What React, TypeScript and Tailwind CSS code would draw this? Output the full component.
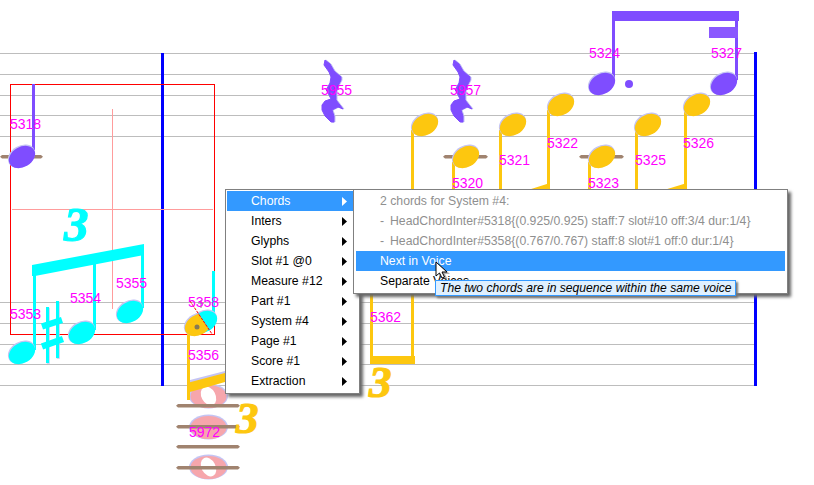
import React from 'react';

const GOLD = '#fdc70f';
const PURPLE = '#7f4dff';
const CYAN = '#00ffff';
const HALO = '#c4c4f4';
const BROWN = '#a0836f';

const staffLines = [53, 74, 95, 115, 136, 302, 323, 344, 364, 385];

// heads: centre x, centre y, colour
const heads: [number, number, string][] = [
  [22, 157, PURPLE],
  [602, 84, PURPLE],
  [724, 84, PURPLE],
  [425, 125, GOLD],
  [466, 157, GOLD],
  [513, 125, GOLD],
  [561, 105, GOLD],
  [602, 157, GOLD],
  [648, 125, GOLD],
  [697, 105, GOLD],
  [22, 353, CYAN],
  [82, 333, CYAN],
  [130, 312, CYAN],
];

// stems: x, top, bottom, colour
const stems: [number, number, number, string][] = [
  [32, 84, 150, PURPLE],
  [612, 11, 80, PURPLE],
  [735, 11, 80, PURPLE],
  [411, 130, 360, GOLD],
  [452, 162, 200, GOLD],
  [499, 130, 200, GOLD],
  [547, 110, 200, GOLD],
  [588, 162, 200, GOLD],
  [635, 130, 200, GOLD],
  [684, 110, 200, GOLD],
  [370, 280, 360, GOLD],
  [187, 327, 400, GOLD],
  [33, 265, 350, CYAN],
  [93, 262, 330, CYAN],
  [141, 250, 308, CYAN],
  [212, 271, 320, CYAN],
];

const labels: [string, number, number][] = [
  ['5318', 10, 129],
  ['5353', 10, 319],
  ['5354', 70, 303],
  ['5355', 116, 288],
  ['5358', 188, 307],
  ['5356', 188, 360],
  ['5972', 189, 437],
  ['5362', 370, 322],
  ['5955', 321, 95],
  ['5957', 450, 95],
  ['5320', 452, 188],
  ['5321', 499, 165],
  ['5322', 547, 148],
  ['5323', 588, 188],
  ['5324', 589, 58],
  ['5327', 711, 58],
  ['5325', 635, 165],
  ['5326', 683, 148],
];

const ledgers: [number, number, number][] = [
  [0, 43, 157],
  [443, 488, 157],
  [579, 624, 157],
];

const lowLedgers: [number, number, number][] = [
  [176, 240, 406],
  [176, 240, 427],
  [176, 240, 447],
  [176, 240, 468],
];

const ledgerPath = (a: number, b: number, y: number) =>
  `M${a} ${y - 0.25} L${a + 2} ${y - 2} L${b - 2} ${y - 2} L${b} ${y - 0.25} L${b - 2} ${y + 1.5} L${a + 2} ${y + 1.5} Z`;

const Rest = ({ x }: { x: number }) => {
  const d =
    'M4 0 L9 4 L13 11 L20 17 L20 20 L17 26 L15 32 L15 40 L22 49 L17 47 L11 50 L13 56 L13 62 L10 62 L4 56 L1 50 L1 45 L4 41 L10 39 L6 31 L5 30 L9 23 L10 17 L8 12 L3 5 Z';
  return (
    <g transform={`translate(${x} 60)`}>
      <path d={d} fill={HALO} stroke={HALO} transform="translate(1 0)" />
      <path d={d} fill={PURPLE} strokeLinejoin="round" stroke={PURPLE} strokeWidth={1} />
    </g>
  );
};

const WholeNote = ({ cy, hole = true }: { cy: number; hole?: boolean }) => (
  <g>
    <ellipse cx={208.5} cy={cy} rx={19.5} ry={12.5} fill={HALO} />
    <ellipse cx={208.5} cy={cy + 0.5} rx={18} ry={11.5} fill="#f6a6ac" />
    {hole && <ellipse cx={208.5} cy={cy} rx={7} ry={10} fill="#ffffff" transform={`rotate(-28 208.5 ${cy})`} />}
  </g>
);

const Head = ({ x, y, c }: { x: number; y: number; c: string }) => (
  <g transform={`rotate(-30 ${x} ${y})`}>
    <ellipse cx={x} cy={y - 1} rx={14.5} ry={10.5} fill={HALO} />
    <ellipse cx={x} cy={y} rx={14} ry={10} fill={c} />
  </g>
);

const Score = () => (
  <svg className="absolute inset-0" width={814} height={485} viewBox="0 0 814 485">
    <defs>
      {/* part of the shared head that lies under the red diagonal */}
      <clipPath id="belowDiagonal">
        <polygon points="180,301 190,301 212,334 212,345 180,345" />
      </clipPath>
    </defs>

    {staffLines.map((y) => (
      <rect key={y} x={0} y={y} width={755} height={1} fill="#bdbdbd" />
    ))}
    <rect x={161} y={53} width={3} height={333} fill="#0000ff" />
    <rect x={754} y={52} width={3} height={334} fill="#0000ff" />

    {ledgers.map(([a, b, y]) => (
      <path key={`${a}-${y}`} d={ledgerPath(a, b, y)} fill={BROWN} />
    ))}

    {/* red selection box */}
    <rect x={10.5} y={84.5} width={204} height={250} fill="none" stroke="#ff0000" />
    <rect x={112} y={109} width={1} height={200} fill="#ff9c9c" />
    <rect x={12} y={209} width={201} height={1} fill="#ff9c9c" />

    {/* hidden whole notes */}
    <WholeNote cy={396} />
    <WholeNote cy={427} hole={false} />
    <WholeNote cy={467} />
    {lowLedgers.map(([a, b, y]) => (
      <path key={y} d={ledgerPath(a, b, y)} fill={BROWN} />
    ))}

    {stems.map(([x, t, b, c]) => (
      <rect key={`${x}-${t}`} x={x} y={t} width={3} height={b - t} fill={c} />
    ))}

    {heads.map(([x, y, c]) => (
      <Head key={`${x}-${y}`} x={x} y={y} c={c} />
    ))}

    {/* head shared by two chords */}
    <Head x={204} y={322} c={CYAN} />
    <g clipPath="url(#belowDiagonal)">
      <Head x={198} y={325} c={GOLD} />
    </g>

    <Rest x={321} />
    <Rest x={450} />

    {/* purple beams */}
    <rect x={612} y={11} width={127} height={10} fill={PURPLE} />
    <rect x={709} y={27} width={29} height={11} fill="#8a58ff" />
    <circle cx={629} cy={84} r={4} fill={PURPLE} />

    {/* cyan beam and sharp */}
    <polygon points="32,265 144,244 144,255 35,276 32,276" fill={CYAN} />
    <path d="M47.5 307 V363 M57.5 301 V358" stroke={HALO} strokeWidth={3} transform="translate(0.7 0.7)" />
    <path d="M47.5 307 V363 M57.5 301 V358" stroke={CYAN} strokeWidth={3} />
    <path d="M42 326.5 L62 320 M42 346.5 L63 339" stroke={CYAN} strokeWidth={6.5} />

    {/* gold beams */}
    <polygon points="370,356 415,356 415,364 370,364" fill={GOLD} />
    <polygon points="528,190 550,183 550,190" fill={GOLD} />
    <polygon points="664,190 687,183 687,190" fill={GOLD} />
    <polygon points="190,380 225,371 225,375 190,384" fill={HALO} />
    <polygon points="187,383 225,373 225,382 190,392 187,392" fill={GOLD} />

    {/* red pointer */}
    <path d="M190 301 L212 334" stroke="#ff0000" strokeDasharray="3 1" />
    <circle cx={197} cy={327} r={2.5} fill="#857a55" />
    <path d="M201 300 V308 M198 303 H204" stroke="#888888" />

    {/* tuplets */}
    <g fontFamily="'Liberation Serif', serif" fontWeight="bold" fontStyle="italic" strokeWidth={1.2}>
      <text x={64} y={241} fontSize={49} fill={CYAN} stroke={CYAN}>3</text>
      <text x={369} y={397} fontSize={45} fill={GOLD} stroke={GOLD}>3</text>
      <text x={236} y={433} fontSize={45} fill={GOLD} stroke={GOLD}>3</text>
    </g>

    {/* ids */}
    <g fontFamily="'Liberation Sans', sans-serif" fontSize={14} fill="#ff00ff">
      {labels.map(([t, x, y]) => (
        <text key={`${t}-${x}`} x={x} y={y}>{t}</text>
      ))}
    </g>
  </svg>
);

const Arrow = ({ white }: { white?: boolean }) => (
  <svg width={5} height={9} viewBox="0 0 5 9" className={white ? 'text-white' : 'text-black'}>
    <path d="M0 0 L5 4.5 L0 9 Z" fill="currentColor" />
  </svg>
);

const mainItems = ['Inters', 'Glyphs', 'Slot #1 @0', 'Measure #12', 'Part #1', 'System #4', 'Page #1', 'Score #1', 'Extraction'];

const ContextMenu = () => (
  <div className="absolute left-[225px] top-[189px] w-[135px] h-[205px] bg-white border border-[#808080] p-px shadow-[3px_3px_3px_#666666] text-[12.25px] text-black">
    <div className="flex items-center h-5 pl-6 pr-[11px] justify-between bg-[#3399ff] text-white">
      <span>Chords</span>
      <Arrow white />
    </div>
    {mainItems.map((m) => (
      <div key={m} className="flex items-center h-5 pl-6 pr-[11px] justify-between">
        <span>{m}</span>
        <Arrow />
      </div>
    ))}
  </div>
);

const chordRows = [
  'HeadChordInter#5318{(0.925/0.925) staff:7 slot#10 off:3/4 dur:1/4}',
  'HeadChordInter#5358{(0.767/0.767) staff:8 slot#1 off:0 dur:1/4}',
];

const SubMenu = () => (
  <div className="absolute left-[353px] top-[189px] w-[435px] h-[105px] bg-white border border-[#808080] px-[2px] pt-px shadow-[3px_3px_3px_#666666] text-[12.25px]">
    <div className="flex items-center h-5 pl-6 text-[#8f8f8f]">2 chords for System #4:</div>
    {chordRows.map((r) => (
      <div key={r} className="flex items-center h-5 pl-6 text-[#8f8f8f] whitespace-nowrap">
        <span className="w-[10px]">-</span>
        <span>{r}</span>
      </div>
    ))}
    <div className="flex items-center h-5 pl-6 bg-[#3399ff] text-white">Next in Voice</div>
    <div className="flex items-center h-5 pl-6 text-black">Separate Voices</div>
  </div>
);

const Tooltip = () => (
  <div className="absolute left-[435px] top-[280px] w-[301px] h-4 flex items-center pl-1 bg-[#dff0ff] border border-[#3399ff] shadow-[2px_2px_2px_#777777] text-[12.12px] italic text-black whitespace-nowrap">
    The two chords are in sequence within the same voice
  </div>
);

const Cursor = () => (
  <svg className="absolute left-[430px] top-[258px]" width={24} height={24} viewBox="0 0 24 24">
    <path d="M7 5 V19 L10.5 16 L13 21 L15.5 20 L13 15 H18 Z" fill="#555555" opacity={0.45} transform="translate(2 1)" />
    <path d="M6 4 V18 L9.5 15 L12 20 L14.5 19 L12 14 H17 Z" fill="#ffffff" stroke="#000000" strokeWidth={1} />
  </svg>
);

export default function App() {
  return (
    <div className="relative w-[814px] h-[485px] bg-white overflow-hidden font-['Liberation_Sans',sans-serif]">
      <Score />
      <ContextMenu />
      <SubMenu />
      <Tooltip />
      <Cursor />
    </div>
  );
}
